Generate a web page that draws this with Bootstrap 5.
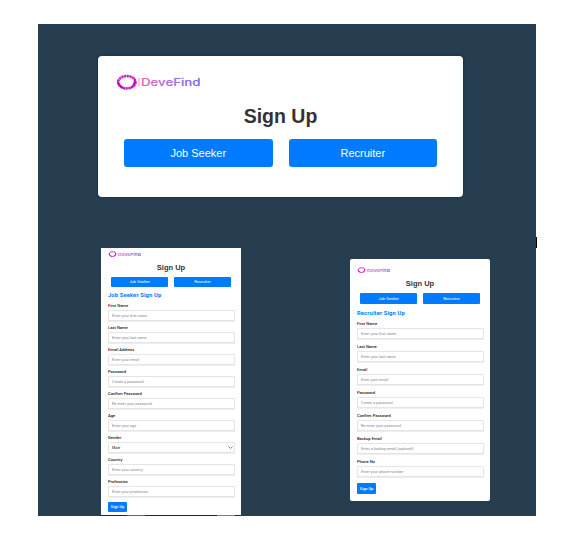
<!DOCTYPE html>
<html lang="en">
<head>
<meta charset="utf-8">
<title>DeveFind Sign Up</title>
<link href="https://cdn.jsdelivr.net/npm/bootstrap@5.3.0/dist/css/bootstrap.min.css" rel="stylesheet">
<style>
body{width:566px;height:537px;overflow:hidden;background:#fff;font-family:"Liberation Sans",Arial,sans-serif;color:#333}
.board{width:498px;height:492px;margin:24px 0 0 38px;background:#263e50;overflow:hidden}
.hero{width:365px;height:141px;margin:32px 0 0 60px;padding:17px 26px 0;border-radius:4px;box-shadow:0 0 3px #142a3a}
.hero .logo{width:86px;height:18px;margin-left:-9px}
.hero h1{font-size:19.5px;font-weight:700;line-height:24px;margin:13px 0 11px}
.btn-blue,.btn-blue:hover{background:#007bff;color:#fff;border:0;padding:0}
.hero .btn-blue{height:28px;font-size:11px;line-height:27px;border-radius:3px}
.hero .pair{gap:16px}
.forms{padding:51px 0 0 63px;gap:109px}
.sheet{width:140px;height:268px;padding:2.3px 7px 0;background:#fff;font-family:Roboto,sans-serif}
.sheet .logo{width:33px;height:8px}
.sheet h2{font:700 7.5px/10px "Liberation Sans",Arial,sans-serif;margin:4.7px 0 4px;color:#333}
.sheet .pair{gap:6px;padding:0 3px}
.sheet .btn-blue{height:10px;font-size:4.2px;line-height:10px;border-radius:1px}
.sheet h3{font-size:5.8px;font-weight:700;line-height:7px;letter-spacing:.13px;color:#007bff;margin:5.4px 0 3.9px}
.sheet .fieldrow{height:22px}
.sheet .form-label{font-size:4.1px;font-weight:500;line-height:5px;margin:0 0 2px;color:#222}
.sheet .form-control,.sheet .form-select{width:127px;height:11px;min-height:0;padding:0 3px;font-size:3.8px;line-height:9px;border:1px solid #e3e5e8;border-radius:1.5px;box-shadow:0 .4px 0 #ddd;color:#222}
.sheet .form-control::placeholder{color:#85898e}
.sheet .form-select{background-position:right 1.5px center;background-size:5px 5px}
.sheet .submit{width:19px;margin-top:.6px;font-size:3.9px;font-weight:500}
.taskbar{height:1px;margin:3px -7px 0;background:linear-gradient(90deg,#23282e 26px,#666 26px 44px,#23282e 44px 116px,#9b7555 116px 134px,#23282e 134px)}
.sheet-right{height:242px;margin-top:11px;padding:6.6px 7px 0;border-radius:2px}
.sheet-right .fieldrow{height:23.05px}
.sheet-right .btn-blue{height:11px;line-height:11px}
.sheet-right h2{margin:5.4px 0 4px}
.sheet-right h3{margin:5.6px 0 4px}
.caret{left:536px;top:237px;width:1px;height:11px;background:#000}
</style>
<script src="https://cdn.jsdelivr.net/npm/bootstrap@5.3.0/dist/js/bootstrap.bundle.min.js"></script>
</head>
<body>
<svg width="0" height="0" class="position-absolute">
<defs>
<linearGradient id="brand" gradientUnits="userSpaceOnUse" x1="22" y1="0" x2="86" y2="0"><stop stop-color="#ef68b4"/><stop offset=".5" stop-color="#ad6bdf"/><stop offset="1" stop-color="#7565ee"/></linearGradient>
<symbol id="logo" viewBox="0 0 86 18">
<ellipse cx="11.8" cy="9.2" rx="8.7" ry="6.2" fill="none" stroke="#e28be2" stroke-width="2.6"/>
<ellipse cx="11.8" cy="9.2" rx="8.7" ry="6.2" fill="none" stroke="#c91fcb" stroke-width="2.4" stroke-dasharray="1.7 1"/>
<path d="M19 4.5C22.5 8 21 13.5 14 16C17.5 13 19.6 9 19 4.5ZM2.5 6.5C1.3 11.5 5 15.6 11 16.4C6.5 13.4 3.8 10.5 2.5 6.5Z" fill="#bd08c0"/>
<path d="M24 5v8.5" stroke="#f09acb" stroke-width="1"/>
<text x="26" y="13.4" textLength="59.5" lengthAdjust="spacingAndGlyphs" font-family="Inter,sans-serif" font-weight="500" font-size="10.3" fill="url(#brand)" stroke="url(#brand)" stroke-width=".15">DeveFind</text>
</symbol>
</defs>
</svg>
<main class="board">
  <section class="hero bg-white">
    <svg class="logo d-block"><use href="#logo"/></svg>
    <h1 class="text-center">Sign Up</h1>
    <div class="pair d-flex"><button class="btn btn-blue flex-fill w-50">Job Seeker</button><button class="btn btn-blue flex-fill w-50">Recruiter</button></div>
  </section>
  <div class="forms d-flex align-items-start">
    <form class="sheet">
      <svg class="logo d-block"><use href="#logo"/></svg>
      <h2 class="text-center">Sign Up</h2>
      <div class="pair d-flex"><button type="button" class="btn btn-blue w-50">Job Seeker</button><button type="button" class="btn btn-blue w-50">Recruiter</button></div>
      <h3>Job Seeker Sign Up</h3>
      <div class="fieldrow"><label class="form-label d-block">First Name</label><input class="form-control" placeholder="Enter your first name"></div>
      <div class="fieldrow"><label class="form-label d-block">Last Name</label><input class="form-control" placeholder="Enter your last name"></div>
      <div class="fieldrow"><label class="form-label d-block">Email Address</label><input class="form-control" placeholder="Enter your email"></div>
      <div class="fieldrow"><label class="form-label d-block">Password</label><input class="form-control" placeholder="Create a password"></div>
      <div class="fieldrow"><label class="form-label d-block">Confirm Password</label><input class="form-control" placeholder="Re-enter your password"></div>
      <div class="fieldrow"><label class="form-label d-block">Age</label><input class="form-control" placeholder="Enter your age"></div>
      <div class="fieldrow"><label class="form-label d-block">Gender</label><select class="form-select"><option>Male</option></select></div>
      <div class="fieldrow"><label class="form-label d-block">Country</label><input class="form-control" placeholder="Enter your country"></div>
      <div class="fieldrow"><label class="form-label d-block">Profession</label><input class="form-control" placeholder="Enter your profession"></div>
      <button type="button" class="btn btn-blue submit d-block">Sign Up</button>
      <div class="taskbar"></div>
    </form>
    <form class="sheet sheet-right">
      <svg class="logo d-block"><use href="#logo"/></svg>
      <h2 class="text-center">Sign Up</h2>
      <div class="pair d-flex"><button type="button" class="btn btn-blue w-50">Job Seeker</button><button type="button" class="btn btn-blue w-50">Recruiter</button></div>
      <h3>Recruiter Sign Up</h3>
      <div class="fieldrow"><label class="form-label d-block">First Name</label><input class="form-control" placeholder="Enter your first name"></div>
      <div class="fieldrow"><label class="form-label d-block">Last Name</label><input class="form-control" placeholder="Enter your last name"></div>
      <div class="fieldrow"><label class="form-label d-block">Email</label><input class="form-control" placeholder="Enter your email"></div>
      <div class="fieldrow"><label class="form-label d-block">Password</label><input class="form-control" placeholder="Create a password"></div>
      <div class="fieldrow"><label class="form-label d-block">Confirm Password</label><input class="form-control" placeholder="Re-enter your password"></div>
      <div class="fieldrow"><label class="form-label d-block">Backup Email</label><input class="form-control" placeholder="Enter a backup email (optional)"></div>
      <div class="fieldrow"><label class="form-label d-block">Phone No</label><input class="form-control" placeholder="Enter your phone number"></div>
      <button type="button" class="btn btn-blue submit d-block">Sign Up</button>
    </form>
  </div>
</main>
<div class="caret position-absolute"></div>
</body>
</html>
